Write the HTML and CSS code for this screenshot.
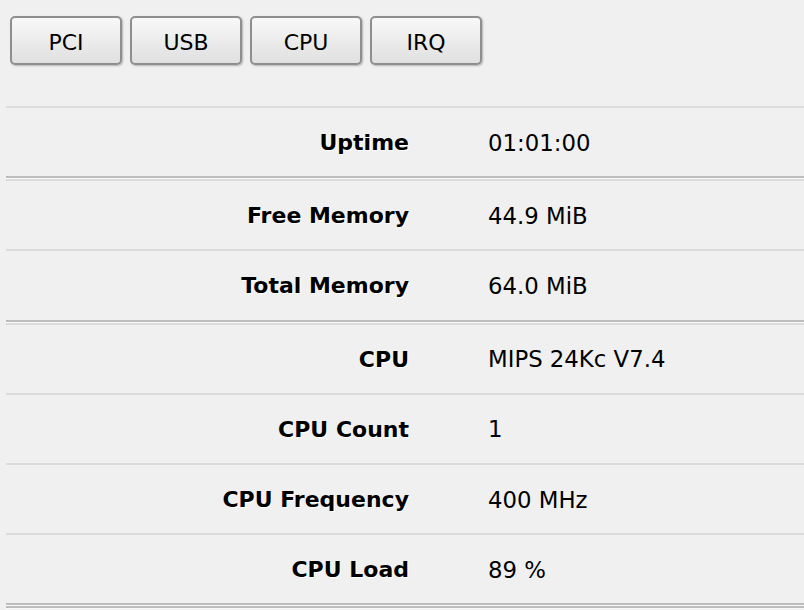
FILE: index.html
```html
<!DOCTYPE html>
<html>
<head>
<meta charset="utf-8">
<link rel="stylesheet" href="styles.css">
</head>
<body>
<div class="page">
  <div class="tabs">
    <button class="btn">PCI</button>
    <button class="btn">USB</button>
    <button class="btn">CPU</button>
    <button class="btn">IRQ</button>
  </div>
  <div class="section">
    <div class="row"><div class="label">Uptime</div><div class="value">01:01:00</div></div>
  </div>
  <div class="section">
    <div class="row"><div class="label">Free Memory</div><div class="value">44.9 MiB</div></div>
    <div class="row"><div class="label">Total Memory</div><div class="value">64.0 MiB</div></div>
  </div>
  <div class="section">
    <div class="row"><div class="label">CPU</div><div class="value">MIPS 24Kc V7.4</div></div>
    <div class="row"><div class="label">CPU Count</div><div class="value">1</div></div>
    <div class="row"><div class="label">CPU Frequency</div><div class="value">400 MHz</div></div>
    <div class="row"><div class="label">CPU Load</div><div class="value">89 %</div></div>
  </div>
  <div class="section"></div>
</div>
</body>
</html>
```

FILE: styles.css
```css
html, body {
  margin: 0;
  padding: 0;
  background: #f0f0f0;
}
body {
  font-family: "DejaVu Sans", Verdana, sans-serif;
  font-size: 22px;
  color: #000;
}
.page {
  padding: 16px 0 0 6px;
}
.tabs {
  display: flex;
  gap: 8px;
  margin-left: 4px;
  margin-bottom: 41px;
}
.btn {
  width: 112px;
  height: 49px;
  font-family: inherit;
  font-size: 22px;
  color: #000;
  border: 2px solid #8e8e8e;
  border-radius: 5px;
  background: linear-gradient(#f8f8f8, #e0e0e0);
  box-shadow: 1px 1px 2px rgba(0,0,0,0.25);
  padding: 3px 0 0;
}
.section {
  border-bottom: 2px solid #bcbcbc;
  box-shadow: 0 1px 0 #fafafa;
  margin-bottom: 1px;
}
.row {
  display: grid;
  grid-template-columns: 403px 1fr;
  column-gap: 79px;
  align-items: center;
  box-sizing: border-box;
  height: 70.2px;
  padding-top: 1px;
  border-top: 2px solid #dcdcdc;
}
.label {
  text-align: right;
  font-weight: bold;
  text-shadow: 1px 1px 0 #fff;
}
.value {
  color: #000;
  font-size: 22.8px;
}
```
